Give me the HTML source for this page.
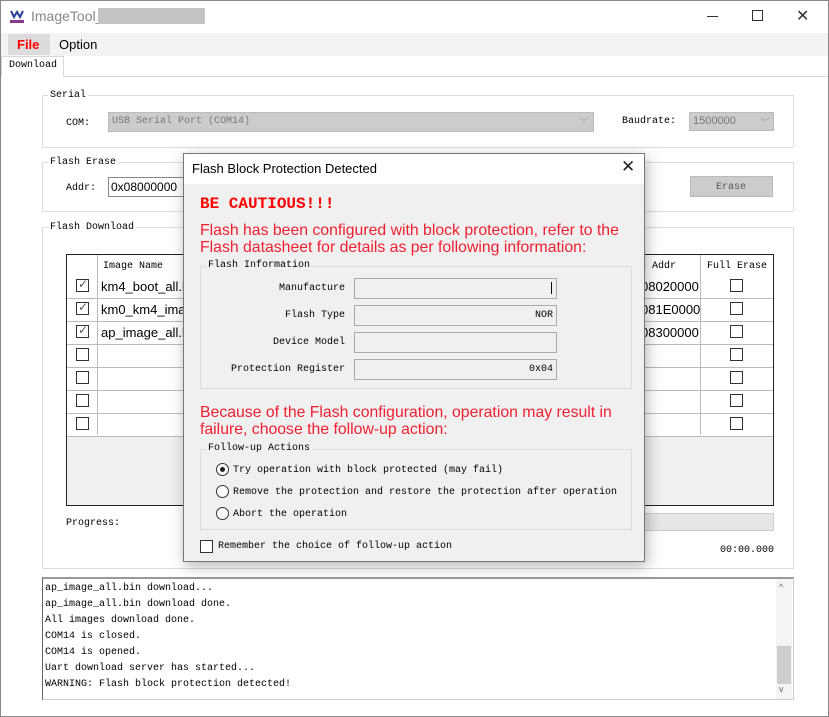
<!DOCTYPE html>
<html><head><meta charset="utf-8"><style>
*{box-sizing:border-box;margin:0;padding:0}
body{width:829px;height:717px;background:#fff;position:relative;overflow:hidden;font-family:"Liberation Sans",sans-serif}
.a{position:absolute}
.m{font-family:"Liberation Mono","Noto Sans CJK SC",monospace;font-size:10px;color:#000;white-space:nowrap;margin-top:2px}
.s{font-family:"Liberation Sans",sans-serif;white-space:nowrap}
.grp{position:absolute;border:1px solid #dcdcdc}
.lg{position:absolute;background:#fff;padding:0 2px;line-height:12px}
.cb{position:absolute;width:13px;height:13px;border:1px solid #333;background:#fff}
.row{position:absolute;left:67px;width:706px;height:23px;border-bottom:1px solid #bbb}
.rad{position:absolute;width:13px;height:13px;border:1px solid #333;border-radius:50%;background:#fff}
.inp{position:absolute;height:21px;border:1px solid #aaa;background:#f0f0f0;left:354px;width:203px}
</style></head><body>
<div class="a" style="left:0;top:0;width:829px;height:717px;border:1px solid #888"></div>
<!-- title -->
<svg class="a" style="left:9px;top:8px" width="16" height="16"><path d="M2 3 L5 9 L8 4 L11 9 L14 3" stroke="#2a3d9a" stroke-width="2" fill="none"/><rect x="1" y="12" width="14" height="3" fill="#8a3c8a"/></svg>
<div class="a s" style="left:31px;top:8px;font-size:14px;color:#888">ImageTool_</div>
<div class="a" style="left:98px;top:8px;width:107px;height:16px;background:#c4c4c4"></div>
<div class="a" style="left:707px;top:16px;width:11px;height:1px;background:#333"></div>
<div class="a" style="left:752px;top:10px;width:11px;height:11px;border:1px solid #333"></div>
<div class="a s" style="left:796px;top:6px;font-size:16px;color:#333">✕</div>
<!-- menu -->
<div class="a" style="left:1px;top:33px;width:827px;height:23px;background:#f3f3f3"></div>
<div class="a" style="left:8px;top:34px;width:42px;height:21px;background:#dcdcdc"></div>
<div class="a s" style="left:17px;top:37px;font-size:13px;font-weight:bold;color:#f00">File</div>
<div class="a s" style="left:59px;top:37px;font-size:13px;color:#000">Option</div>
<div class="a" style="left:1px;top:76px;width:827px;height:1px;background:#d8d8d8"></div>
<div class="a" style="left:1px;top:56px;width:63px;height:21px;background:#fff;border:1px solid #d8d8d8;border-bottom:none"></div>
<div class="a m" style="left:9px;top:58px">Download</div>
<!-- serial -->
<div class="grp" style="left:42px;top:95px;width:752px;height:53px"></div>
<div class="lg m" style="left:48px;top:88px">Serial</div>
<div class="a m" style="left:66px;top:116px">COM:</div>
<div class="a" style="left:108px;top:112px;width:486px;height:20px;background:#ccc;border:1px solid #bbb"></div>
<div class="a m" style="left:112px;top:114px;color:#777">USB Serial Port (COM14)</div>
<div class="a s" style="left:579px;top:114px;font-size:10px;color:#999">﹀</div>
<div class="a m" style="left:622px;top:114px">Baudrate:</div>
<div class="a" style="left:689px;top:112px;width:85px;height:19px;background:#ccc;border:1px solid #bbb"></div>
<div class="a s" style="left:693px;top:115px;font-size:11px;color:#777">1500000</div>
<div class="a s" style="left:760px;top:114px;font-size:10px;color:#999">﹀</div>
<!-- erase -->
<div class="grp" style="left:42px;top:162px;width:752px;height:50px"></div>
<div class="lg m" style="left:48px;top:155px">Flash Erase</div>
<div class="a m" style="left:66px;top:181px">Addr:</div>
<div class="a" style="left:108px;top:177px;width:90px;height:20px;border:1px solid #888;background:#fff"></div>
<div class="a s" style="left:111px;top:180px;font-size:12px">0x08000000</div>
<div class="a" style="left:690px;top:176px;width:83px;height:21px;background:#ccc;border:1px solid #bbb"></div>
<div class="a m" style="left:716px;top:180px;color:#555">Erase</div>
<!-- download -->
<div class="grp" style="left:42px;top:227px;width:752px;height:342px"></div>
<div class="lg m" style="left:48px;top:220px">Flash Download</div>
<div class="a" style="left:66px;top:254px;width:708px;height:252px;border:1px solid #222;background:#f0f0f0"></div>
<div class="row" style="top:255px;background:#fff"></div>
<div class="a m" style="left:103px;top:259px">Image Name</div>
<div class="a m" style="left:640px;top:259px">d Addr</div>
<div class="a m" style="left:707px;top:259px">Full Erase</div>
<div class="row" style="top:276px;background:#fff"></div>
<div class="row" style="top:299px;background:#fff"></div>
<div class="row" style="top:322px;background:#fff"></div>
<div class="row" style="top:345px;background:#fff"></div>
<div class="row" style="top:368px;background:#fff"></div>
<div class="row" style="top:391px;background:#fff"></div>
<div class="row" style="top:414px;background:#fff"></div>
<div class="a" style="left:97px;top:255px;width:1px;height:180px;background:#bbb"></div>
<div class="a" style="left:700px;top:255px;width:1px;height:180px;background:#bbb"></div>
<div class="cb" style="left:76px;top:279px"></div><div class="a s" style="left:78px;top:277px;font-size:12px;color:#555">✓</div>
<div class="cb" style="left:76px;top:302px"></div><div class="a s" style="left:78px;top:300px;font-size:12px;color:#555">✓</div>
<div class="cb" style="left:76px;top:325px"></div><div class="a s" style="left:78px;top:323px;font-size:12px;color:#555">✓</div>
<div class="cb" style="left:76px;top:348px"></div><div class="cb" style="left:76px;top:371px"></div><div class="cb" style="left:76px;top:394px"></div><div class="cb" style="left:76px;top:417px"></div>
<div class="a s" style="left:101px;top:279px;font-size:13px">km4_boot_all.b</div>
<div class="a s" style="left:101px;top:302px;font-size:13px">km0_km4_ima</div>
<div class="a s" style="left:101px;top:325px;font-size:13px">ap_image_all.b</div>
<div class="a s" style="left:641px;top:279px;font-size:13px">08020000</div>
<div class="a s" style="left:641px;top:302px;font-size:13px">081E0000</div>
<div class="a s" style="left:641px;top:325px;font-size:13px">08300000</div>
<div class="cb" style="left:730px;top:279px"></div><div class="cb" style="left:730px;top:302px"></div><div class="cb" style="left:730px;top:325px"></div><div class="cb" style="left:730px;top:348px"></div><div class="cb" style="left:730px;top:371px"></div><div class="cb" style="left:730px;top:394px"></div><div class="cb" style="left:730px;top:417px"></div>
<div class="a m" style="left:66px;top:516px">Progress:</div>
<div class="a" style="left:640px;top:513px;width:134px;height:18px;background:#e6e6e6;border:1px solid #ccc"></div>
<div class="a m" style="left:720px;top:543px">00:00.000</div>
<!-- log -->
<div class="a" style="left:42px;top:577px;width:752px;height:123px;border:1px solid #ccc;border-top:2px solid #999;border-left:1px solid #666;background:#fff"></div>
<div class="a" style="left:776px;top:579px;width:16px;height:120px;background:#f4f4f4"></div>
<div class="a" style="left:777px;top:646px;width:14px;height:38px;background:#cdcdcd"></div>
<div class="a s" style="left:779px;top:582px;font-size:9px;color:#666">^</div>
<div class="a s" style="left:779px;top:684px;font-size:9px;color:#666">v</div>
<div class="a m" style="left:45px;top:579px;line-height:16px">ap_image_all.bin download...<br>ap_image_all.bin download done.<br>All images download done.<br>COM14 is closed.<br>COM14 is opened.<br>Uart download server has started...<br>WARNING: Flash block protection detected!</div>
<!-- dialog -->
<div class="a" style="left:183px;top:153px;width:462px;height:409px;background:#f0f0f0;border:1px solid #777;box-shadow:2px 4px 14px rgba(0,0,0,.3)"></div>
<div class="a" style="left:184px;top:154px;width:460px;height:30px;background:#fff"></div>
<div class="a s" style="left:192px;top:161px;font-size:13px;color:#000">Flash Block Protection Detected</div>
<div class="a s" style="left:621px;top:157px;font-size:17px;color:#222">✕</div>
<div class="a" style="left:200px;top:195px;font-family:'Liberation Mono',monospace;font-weight:bold;font-size:16px;color:#f00">BE CAUTIOUS!!!</div>
<div class="a s" style="left:200px;top:222px;font-size:15.8px;color:#f02030;line-height:17px">Flash has been configured with block protection, refer to the<br>Flash datasheet for details as per following information:</div>
<div class="a" style="left:200px;top:266px;width:432px;height:123px;border:1px solid #dcdcdc"></div>
<div class="lg m" style="left:206px;top:258px;background:#f0f0f0">Flash Information</div>
<div class="a m" style="left:200px;top:281px;width:145px;text-align:right">Manufacture</div>
<div class="a m" style="left:200px;top:308px;width:145px;text-align:right">Flash Type</div>
<div class="a m" style="left:200px;top:335px;width:145px;text-align:right">Device Model</div>
<div class="a m" style="left:200px;top:362px;width:145px;text-align:right">Protection Register</div>
<div class="inp" style="top:278px"></div><div class="a" style="left:551px;top:282px;width:1px;height:12px;background:#000"></div>
<div class="inp" style="top:305px"></div><div class="a m" style="left:535px;top:308px">NOR</div>
<div class="inp" style="top:332px"></div>
<div class="inp" style="top:359px"></div><div class="a m" style="left:529px;top:362px">0x04</div>
<div class="a s" style="left:200px;top:404px;font-size:15.8px;color:#f02030;line-height:17px">Because of the Flash configuration, operation may result in<br>failure, choose the follow-up action:</div>
<div class="a" style="left:200px;top:449px;width:432px;height:81px;border:1px solid #dcdcdc"></div>
<div class="lg m" style="left:206px;top:441px;background:#f0f0f0">Follow-up Actions</div>
<div class="rad" style="left:216px;top:463px"></div><div class="a" style="left:220px;top:467px;width:5px;height:5px;border-radius:50%;background:#222"></div>
<div class="rad" style="left:216px;top:485px"></div>
<div class="rad" style="left:216px;top:507px"></div>
<div class="a m" style="left:233px;top:463px">Try operation with block protected (may fail)</div>
<div class="a m" style="left:233px;top:485px">Remove the protection and restore the protection after operation</div>
<div class="a m" style="left:233px;top:507px">Abort the operation</div>
<div class="cb" style="left:200px;top:540px"></div>
<div class="a m" style="left:218px;top:539px">Remember the choice of follow-up action</div>
</body></html>
